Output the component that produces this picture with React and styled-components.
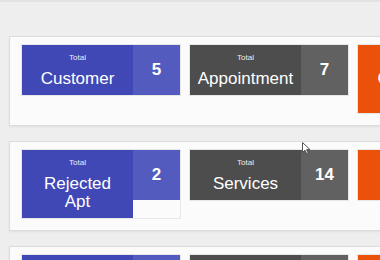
import React from 'react'
import styled, { createGlobalStyle } from 'styled-components';

const GlobalStyle = createGlobalStyle`
  html, body {
    margin: 0;
    padding: 0;
    background: #eeeeee;
    overflow: hidden;
    font-family: "Liberation Sans", Arial, sans-serif;
  }
`;

const palette = {
  blue: { label: '#3f48b5', count: '#535bbf' },
  dark: { label: '#4d4d4d', count: '#616161' },
  orange: { label: '#ea5109', count: '#f0670f' },
};

const Page = styled.div`
  width: 620px;
  min-height: 260px;
  border-top: 2px solid #e2e2e2;
  padding: 34px 0 0 9px;
  box-sizing: border-box;
  display: flex;
  flex-direction: column;
  gap: 15px;
`;

const Panel = styled.section`
  background: #fbfbfb;
  border: 1px solid #dcdcdc;
  box-shadow: 0 1px 2px rgba(0, 0, 0, 0.06);
  padding: 8px 12px 12px;
  display: flex;
  align-items: flex-start;
  gap: 10px;
`;

const Card = styled.div`
  width: 158px;
  flex-shrink: 0;
  display: flex;
  align-items: stretch;
  box-shadow: 0 0 0 1px rgba(0, 0, 0, 0.08);
`;

const Label = styled.div`
  flex: 1;
  background: ${(p) => palette[p.$tone].label};
  color: #fff;
  text-align: center;
  padding: 8px 4px 7px;
`;

const Small = styled.div`
  font-size: 8px;
  line-height: 10px;
  margin-bottom: 7px;
  opacity: 0.9;
`;

const Title = styled.div`
  font-size: 17px;
  line-height: 18px;
`;

const Count = styled.div`
  width: 47px;
  height: 50px;
  align-self: flex-start;
  background: ${(p) => palette[p.$tone].count};
  color: #fff;
  font-size: 17px;
  font-weight: bold;
  display: flex;
  align-items: center;
  justify-content: center;
`;

const Cursor = styled.svg`
  position: absolute;
  left: 302px;
  top: 142px;
`;

const rows = [
  [
    { tone: 'blue', title: ['Customer'], count: 5 },
    { tone: 'dark', title: ['Appointment'], count: 7 },
    { tone: 'orange', title: ['Canceled', 'Apt'], count: 3 },
  ],
  [
    { tone: 'blue', title: ['Rejected', 'Apt'], count: 2 },
    { tone: 'dark', title: ['Services'], count: 14 },
    { tone: 'orange', title: ['Staff'], count: 4 },
  ],
  [
    { tone: 'blue', title: ['Bookings'], count: 9 },
    { tone: 'dark', title: ['Reviews'], count: 6 },
    { tone: 'orange', title: ['Payments'], count: 8 },
  ],
];

function StatCard({ tone, title, count }) {
  return (
    <Card>
      <Label $tone={tone}>
        <Small>Total</Small>
        {title.map((line) => (
          <Title key={line}>{line}</Title>
        ))}
      </Label>
      <Count $tone={tone}>{count}</Count>
    </Card>
  );
}

export default function App() {
  return (
    <>
      <GlobalStyle />
      <Page>
        {rows.map((row, i) => (
          <Panel key={i}>
            {row.map((c) => (
              <StatCard key={c.title.join(' ')} {...c} />
            ))}
          </Panel>
        ))}
      </Page>
      <Cursor width="9" height="13" viewBox="0 0 9 13">
        <path d="M0.5 0.5 L0.5 10.5 L3 8.2 L4.8 12.2 L6.3 11.5 L4.6 7.6 L8 7.6 Z" fill="#fff" stroke="#444" strokeWidth="0.9" />
      </Cursor>
    </>
  );
}
